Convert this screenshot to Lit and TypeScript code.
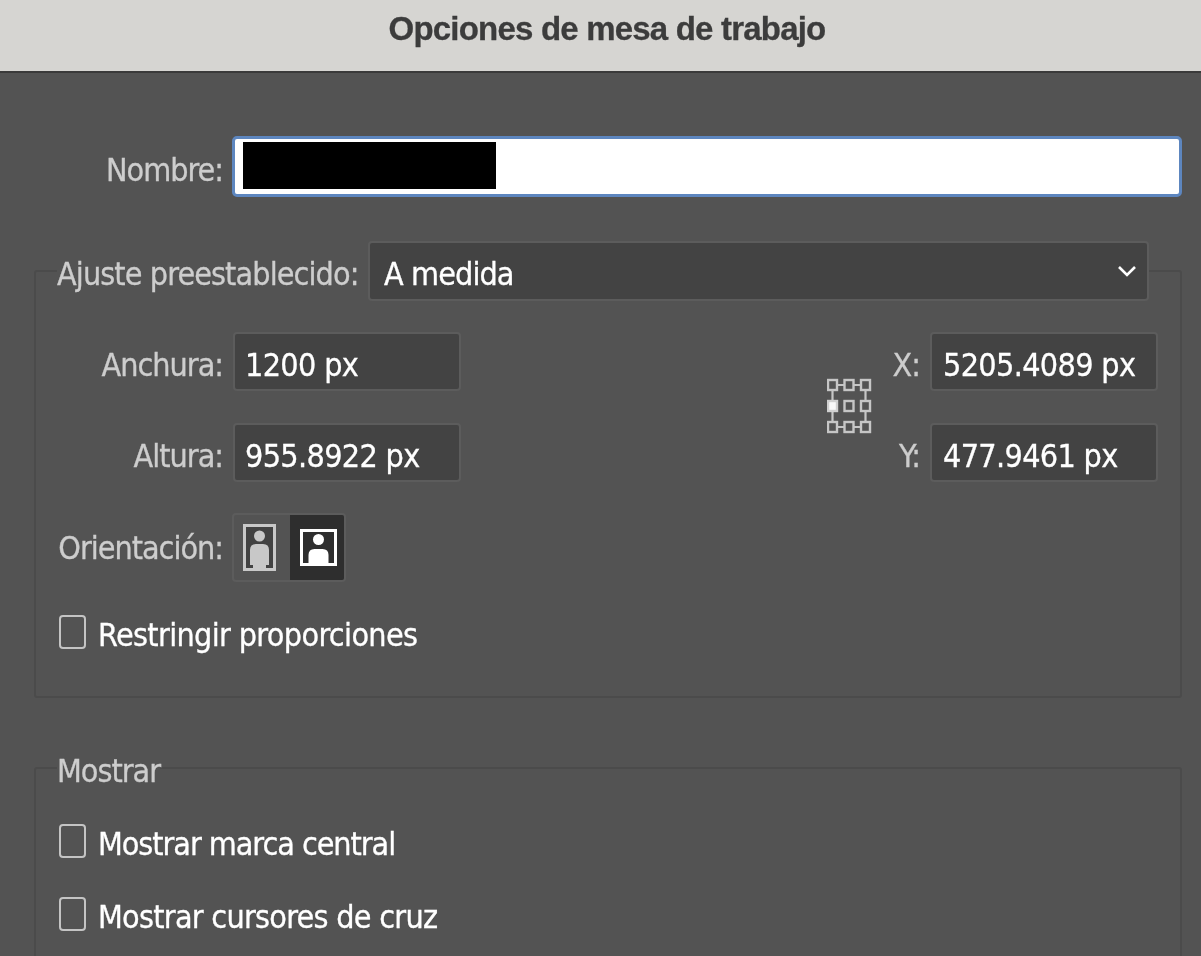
import { LitElement, html, css, svg } from "lit";
import { customElement } from "lit/decorators.js";

const anchorGrid = () => {
  const xs = [5.5, 22, 38.5];
  const ys = [7, 28, 49];
  return html`<svg class="anchor" width="45" height="56" viewBox="0 0 45 56" fill="none" stroke="#c6c6c6" stroke-width="2.4">
    <path d="M10 7h7.5M27 7h7M10 49h7.5M27 49h7M5.5 12v11M38.5 12v11M5.5 33v11M38.5 33v11" stroke-width="2.2" />
    ${ys.map((y, r) =>
      xs.map((x, c) =>
        r === 1 && c === 0
          ? svg`<rect x="${x - 4.5}" y="${y - 5}" width="9" height="10" fill="#f8f8f8" stroke="#d0d0d0"/>`
          : svg`<rect x="${x - 4.5}" y="${y - 5}" width="9" height="10"/>`
      )
    )}
  </svg>`;
};

@customElement("app-root")
export class AppRoot extends LitElement {
  static styles = css`
    :host {
      display: block;
      width: 1201px;
      height: 956px;
      overflow: hidden;
      background: #535353;
      color: #cdcdcd;
      font-family: "DejaVu Sans Condensed", "DejaVu Sans", sans-serif;
      font-stretch: condensed;
      font-size: 32px;
      line-height: 34px;
      letter-spacing: -0.65px;
      -webkit-text-stroke: 0.3px currentColor;
      filter: blur(0.4px);
    }
    .t {
      display: block;
      line-height: 28px;
      padding-top: 6px;
      white-space: nowrap;
    }
    .title {
      height: 73px;
      box-sizing: border-box;
      background: #d6d5d2;
      border-bottom: 2px solid #3a3a3a;
      display: flex;
      align-items: center;
      justify-content: center;
      padding: 0 0 13px 13px;
      color: #3c3c3c;
      font-family: "Liberation Sans", Arial, sans-serif;
      font-stretch: normal;
      font-weight: 700;
      font-size: 33px;
      letter-spacing: -0.8px;
    }
    .row {
      display: flex;
      align-items: center;
      gap: 10px;
    }
    .label {
      text-align: right;
      letter-spacing: -1px;
    }
    .name {
      margin-top: 63px;
      gap: 9px;
    }
    .name .label {
      width: 223px;
    }
    .name-input {
      width: 950px;
      height: 61px;
      box-sizing: border-box;
      background: #fff;
      border: 3px solid #5d86bf;
      border-radius: 5px;
      padding: 3px 0 0 8px;
    }
    .redacted {
      display: block;
      width: 253px;
      height: 47px;
      background: #000;
    }
    fieldset {
      margin: 0 0 0 34px;
      padding: 0;
      width: 1148px;
      box-sizing: border-box;
      border: 2px solid #4b4b4b;
      border-radius: 3px;
      min-width: 0;
    }
    .preset {
      margin-top: 44px;
      height: 457px;
      padding: 31px 0 0;
    }
    legend {
      padding: 0;
      margin-left: 21px;
    }
    .preset-label {
      width: 301px;
      letter-spacing: -0.9px;
    }
    .select {
      width: 781px;
      height: 60px;
      box-sizing: border-box;
      background: #434343;
      border: 2px solid #5c5c5c;
      border-radius: 4px;
      color: #fff;
      display: flex;
      align-items: center;
      justify-content: space-between;
      padding: 0 10px 0 14px;
      letter-spacing: -0.9px;
    }
    .field {
      width: 228px;
      height: 59px;
      box-sizing: border-box;
      background: #434343;
      border: 2px solid #5c5c5c;
      border-radius: 4px;
      color: #fff;
      display: flex;
      align-items: center;
      padding-left: 10px;
    }
    .dims {
      display: flex;
      align-items: center;
    }
    .col {
      display: flex;
      flex-direction: column;
      gap: 32px;
    }
    .left .label {
      width: 187px;
    }
    .anchor {
      margin: 0 0 3px 366px;
      flex: none;
    }
    .right {
      margin-left: 19px;
    }
    .right .label {
      width: 29px;
    }
    .right .field {
      padding-left: 11px;
    }
    .orient {
      margin-top: 31px;
    }
    .orient .label {
      width: 187px;
      padding-top: 0;
      line-height: 34px;
    }
    .segments {
      display: flex;
      width: 114px;
      height: 69px;
      box-sizing: border-box;
      margin-left: -1px;
      border: 2px solid #5c5c5c;
      border-radius: 4px;
      overflow: hidden;
    }
    .seg {
      width: 56px;
      box-sizing: border-box;
      padding-left: 9px;
      display: flex;
      align-items: center;
    }
    .seg.on {
      width: 54px;
      background: #2e2e2e;
      padding-left: 10px;
    }
    .check {
      display: flex;
      align-items: center;
      gap: 12px;
      margin-left: 23px;
      color: #fff;
    }
    .box {
      width: 27px;
      height: 34px;
      box-sizing: border-box;
      border: 2px solid #c4c4c4;
      border-radius: 4px;
      flex: none;
    }
    .preset .check {
      margin-top: 33px;
    }
    .show {
      margin-top: 53px;
      height: 300px;
    }
    .show .check {
      margin-top: 39px;
    }
    .tight {
      letter-spacing: -1.05px;
    }
    .snug {
      letter-spacing: -0.73px;
    }
  `;

  render() {
    return html`
      <div class="title">Opciones de mesa de trabajo</div>
      <div class="row name">
        <span class="label t">Nombre:</span>
        <div class="name-input"><span class="redacted"></span></div>
      </div>

      <fieldset class="preset">
        <legend>
          <div class="row">
            <span class="label t preset-label">Ajuste preestablecido:</span>
            <div class="select">
              <span class="t">A medida</span>
              <svg width="20" height="12" viewBox="0 0 20 12" fill="none" stroke="#fff" stroke-width="2.6">
                <path d="M2 2l8 8 8-8" />
              </svg>
            </div>
          </div>
        </legend>
        <div class="dims">
          <div class="col left">
            <div class="row"><span class="label t">Anchura:</span><div class="field"><span class="t">1200 px</span></div></div>
            <div class="row"><span class="label t">Altura:</span><div class="field"><span class="t">955.8922 px</span></div></div>
          </div>
          ${anchorGrid()}
          <div class="col right">
            <div class="row"><span class="label t">X:</span><div class="field"><span class="t">5205.4089 px</span></div></div>
            <div class="row"><span class="label t">Y:</span><div class="field"><span class="t">477.9461 px</span></div></div>
          </div>
        </div>
        <div class="row orient">
          <span class="label t">Orientación:</span>
          <div class="segments">
            <div class="seg">
              <svg width="33" height="47" viewBox="0 0 33 47">
                <rect x="1.5" y="1.5" width="30" height="44" fill="#424242" stroke="#c8c8c8" stroke-width="3" />
                <circle cx="16.5" cy="12" r="5.5" fill="#c8c8c8" />
                <path d="M7 41V26q0-6 6-6h7q6 0 6 6v15h-3v4H10v-4z" fill="#c8c8c8" />
              </svg>
            </div>
            <div class="seg on">
              <svg width="37" height="37" viewBox="0 0 37 37">
                <rect x="1.5" y="1.5" width="34" height="34" fill="#2e2e2e" stroke="#fff" stroke-width="3" />
                <circle cx="18.5" cy="10.5" r="5.5" fill="#fff" />
                <path d="M8.5 35V26q0-6 6-6h8q6 0 6 6v9z" fill="#fff" />
              </svg>
            </div>
          </div>
        </div>
        <div class="check"><span class="box"></span><span class="t">Restringir proporciones</span></div>
      </fieldset>

      <fieldset class="show">
        <legend><span class="t label">Mostrar</span></legend>
        <div class="check"><span class="box"></span><span class="t tight">Mostrar marca central</span></div>
        <div class="check"><span class="box"></span><span class="t snug">Mostrar cursores de cruz</span></div>
      </fieldset>
    `;
  }
}
